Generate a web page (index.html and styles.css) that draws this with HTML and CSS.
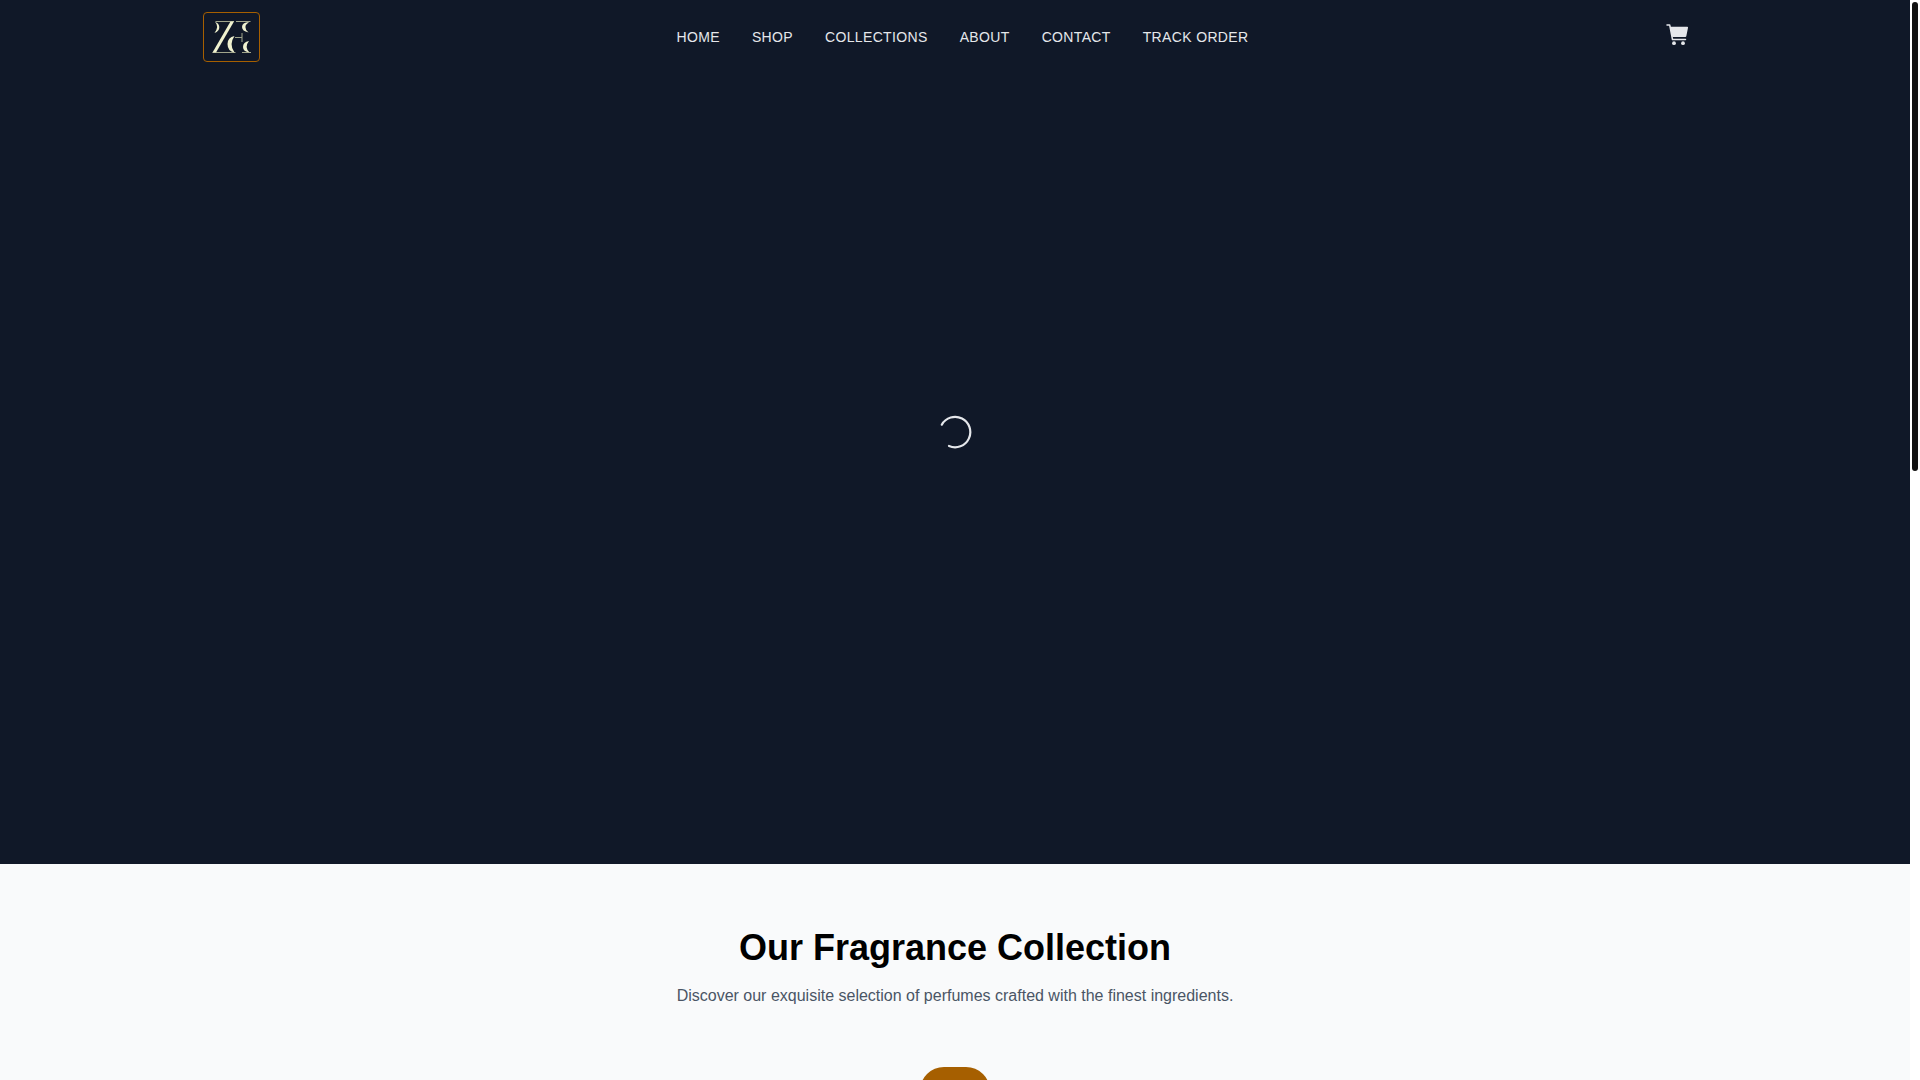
FILE: index.html
```html
<!DOCTYPE html>
<html lang="en">
<head>
<meta charset="utf-8">
<meta name="viewport" content="width=device-width, initial-scale=1">
<title>Our Fragrance Collection</title>
<link rel="stylesheet" href="styles.css">
</head>
<body>
<div class="page">
  <div class="hero">
    <header class="header">
      <a class="logo" href="#" aria-label="Home page">
        <svg class="logo-mark" viewBox="0 0 40 34" aria-hidden="true">
          <path d="M3.500 1.500H22M24 1.500H38.500M.500 32.500H23.500M30 32.500H39" fill="none" stroke="#a0a58c" stroke-width="1"/>
          <path d="M18.500 1.500H22L4 32.500H.500Z"/>
          <path d="M3 2Q7.500 6 2.500 13Q7.500 11 7.300 7Q7 3 3 2Z"/>
          <path d="M37 2Q30 2.500 30 7Q30 11 36.500 12.500Q30 7 37 2Z"/>
          <path d="M22.500 16Q15.500 17.500 15.500 24Q15.500 31 22.500 32.500Q16.500 24.500 22.500 16Z"/>
          <path d="M37 21Q31 22 31 27Q31 31.500 37.500 32.500Q32 27 37 21Z"/>
          <path d="M23 17.500H30M30 13v9" fill="none" stroke="#a0a58c" stroke-width="1"/>
        </svg>
      </a>
      <nav class="nav" aria-label="Main">
        <a href="#">HOME</a>
        <a href="#">SHOP</a>
        <a href="#">COLLECTIONS</a>
        <a href="#">ABOUT</a>
        <a href="#">CONTACT</a>
        <a href="#">TRACK ORDER</a>
      </nav>
      <button class="cart" type="button" aria-label="Cart">
        <svg viewBox="0 0 24 24" aria-hidden="true"><path d="M4.800 4.800H22.200a.8.8 0 0 1 .8 1L21.300 14.200a1 1 0 0 1-1 .8H7.300Z"/><path d="M2 2.900H4.700L7.500 17.500H20.500" fill="none" stroke="#e5e7eb" stroke-width="1.500" stroke-linecap="round" stroke-linejoin="round"/><circle cx="9" cy="21.200" r="1.900"/><circle cx="18" cy="21.200" r="1.900"/></svg>
      </button>
    </header>
    <div class="loading" role="status" aria-label="Loading">
      <svg class="spinner" viewBox="0 0 34 34" aria-hidden="true"><path d="M3.800 9.700A15.200 15.200 0 1 1 11 31" fill="none" stroke="#e5e7eb" stroke-width="2.200" stroke-linecap="round"/></svg>
    </div>
  </div>
  <main class="collection">
    <h2>Our Fragrance Collection</h2>
    <p>Discover our exquisite selection of perfumes crafted with the finest ingredients.</p>
    <div class="filters"><button class="filter" type="button" aria-label="All"></button></div>
  </main>
</div>
<div class="scrollbar" aria-hidden="true"><div class="thumb"></div></div>
</body>
</html>
```

FILE: styles.css
```css
* { box-sizing: border-box; }

body {
  margin: 0;
  height: 100vh;
  display: grid;
  grid-template-columns: 1fr 10px;
  overflow: hidden;
  font: 16px/24px "Liberation Sans", Arial, sans-serif;
  background: #fff;
}

.page {
  min-width: 0;
  height: 100vh;
  overflow: hidden;
  background: #f9fafb;
}

.hero {
  height: 80vh;
  background: #101828;
  display: grid;
  position: relative;
}

.header {
  position: absolute;
  inset: 0 0 auto;
  width: 100%;
  max-width: 1536px;
  margin: 0 auto;
  padding: 12px 16px;
  display: flex;
  align-items: center;
  justify-content: space-between;
}

.logo {
  display: flex;
  align-items: center;
  padding-left: 8px;
  width: 57px;
  height: 50px;
  border: 1px solid #a65f00;
  border-radius: 4px;
}

.logo-mark {
  width: 40px;
  height: 34px;
  fill: #f0f2d0;
}

.nav {
  display: flex;
  gap: 32px;
  font-size: 14px;
  line-height: 20px;
  letter-spacing: 0.025em;
}

.nav a {
  color: #e5e7eb;
  text-decoration: none;
}

.cart {
  display: flex;
  border: 0;
  padding: 0 18px 6px 0;
  background: none;
  fill: #e5e7eb;
}

.cart svg {
  width: 24px;
  height: 24px;
}

.loading {
  place-self: center;
  display: flex;
}

.spinner {
  width: 34px;
  height: 34px;
}

.collection {
  padding: 64px 16px;
  text-align: center;
}

.collection h2 {
  margin: 0 0 16px;
  font-size: 36px;
  line-height: 40px;
  color: #000;
}

.collection p {
  margin: 0;
  color: #4a5565;
}

.filters {
  display: flex;
  justify-content: center;
  margin-top: 59px;
}

.filter {
  min-width: 70px;
  height: 48px;
  padding: 12px 24px;
  border: 0;
  border-radius: 24px;
  background: #a65f00;
}

.scrollbar { padding: 2px; }

.thumb {
  height: 469px;
  border-radius: 3px;
  background: #111;
}
```
